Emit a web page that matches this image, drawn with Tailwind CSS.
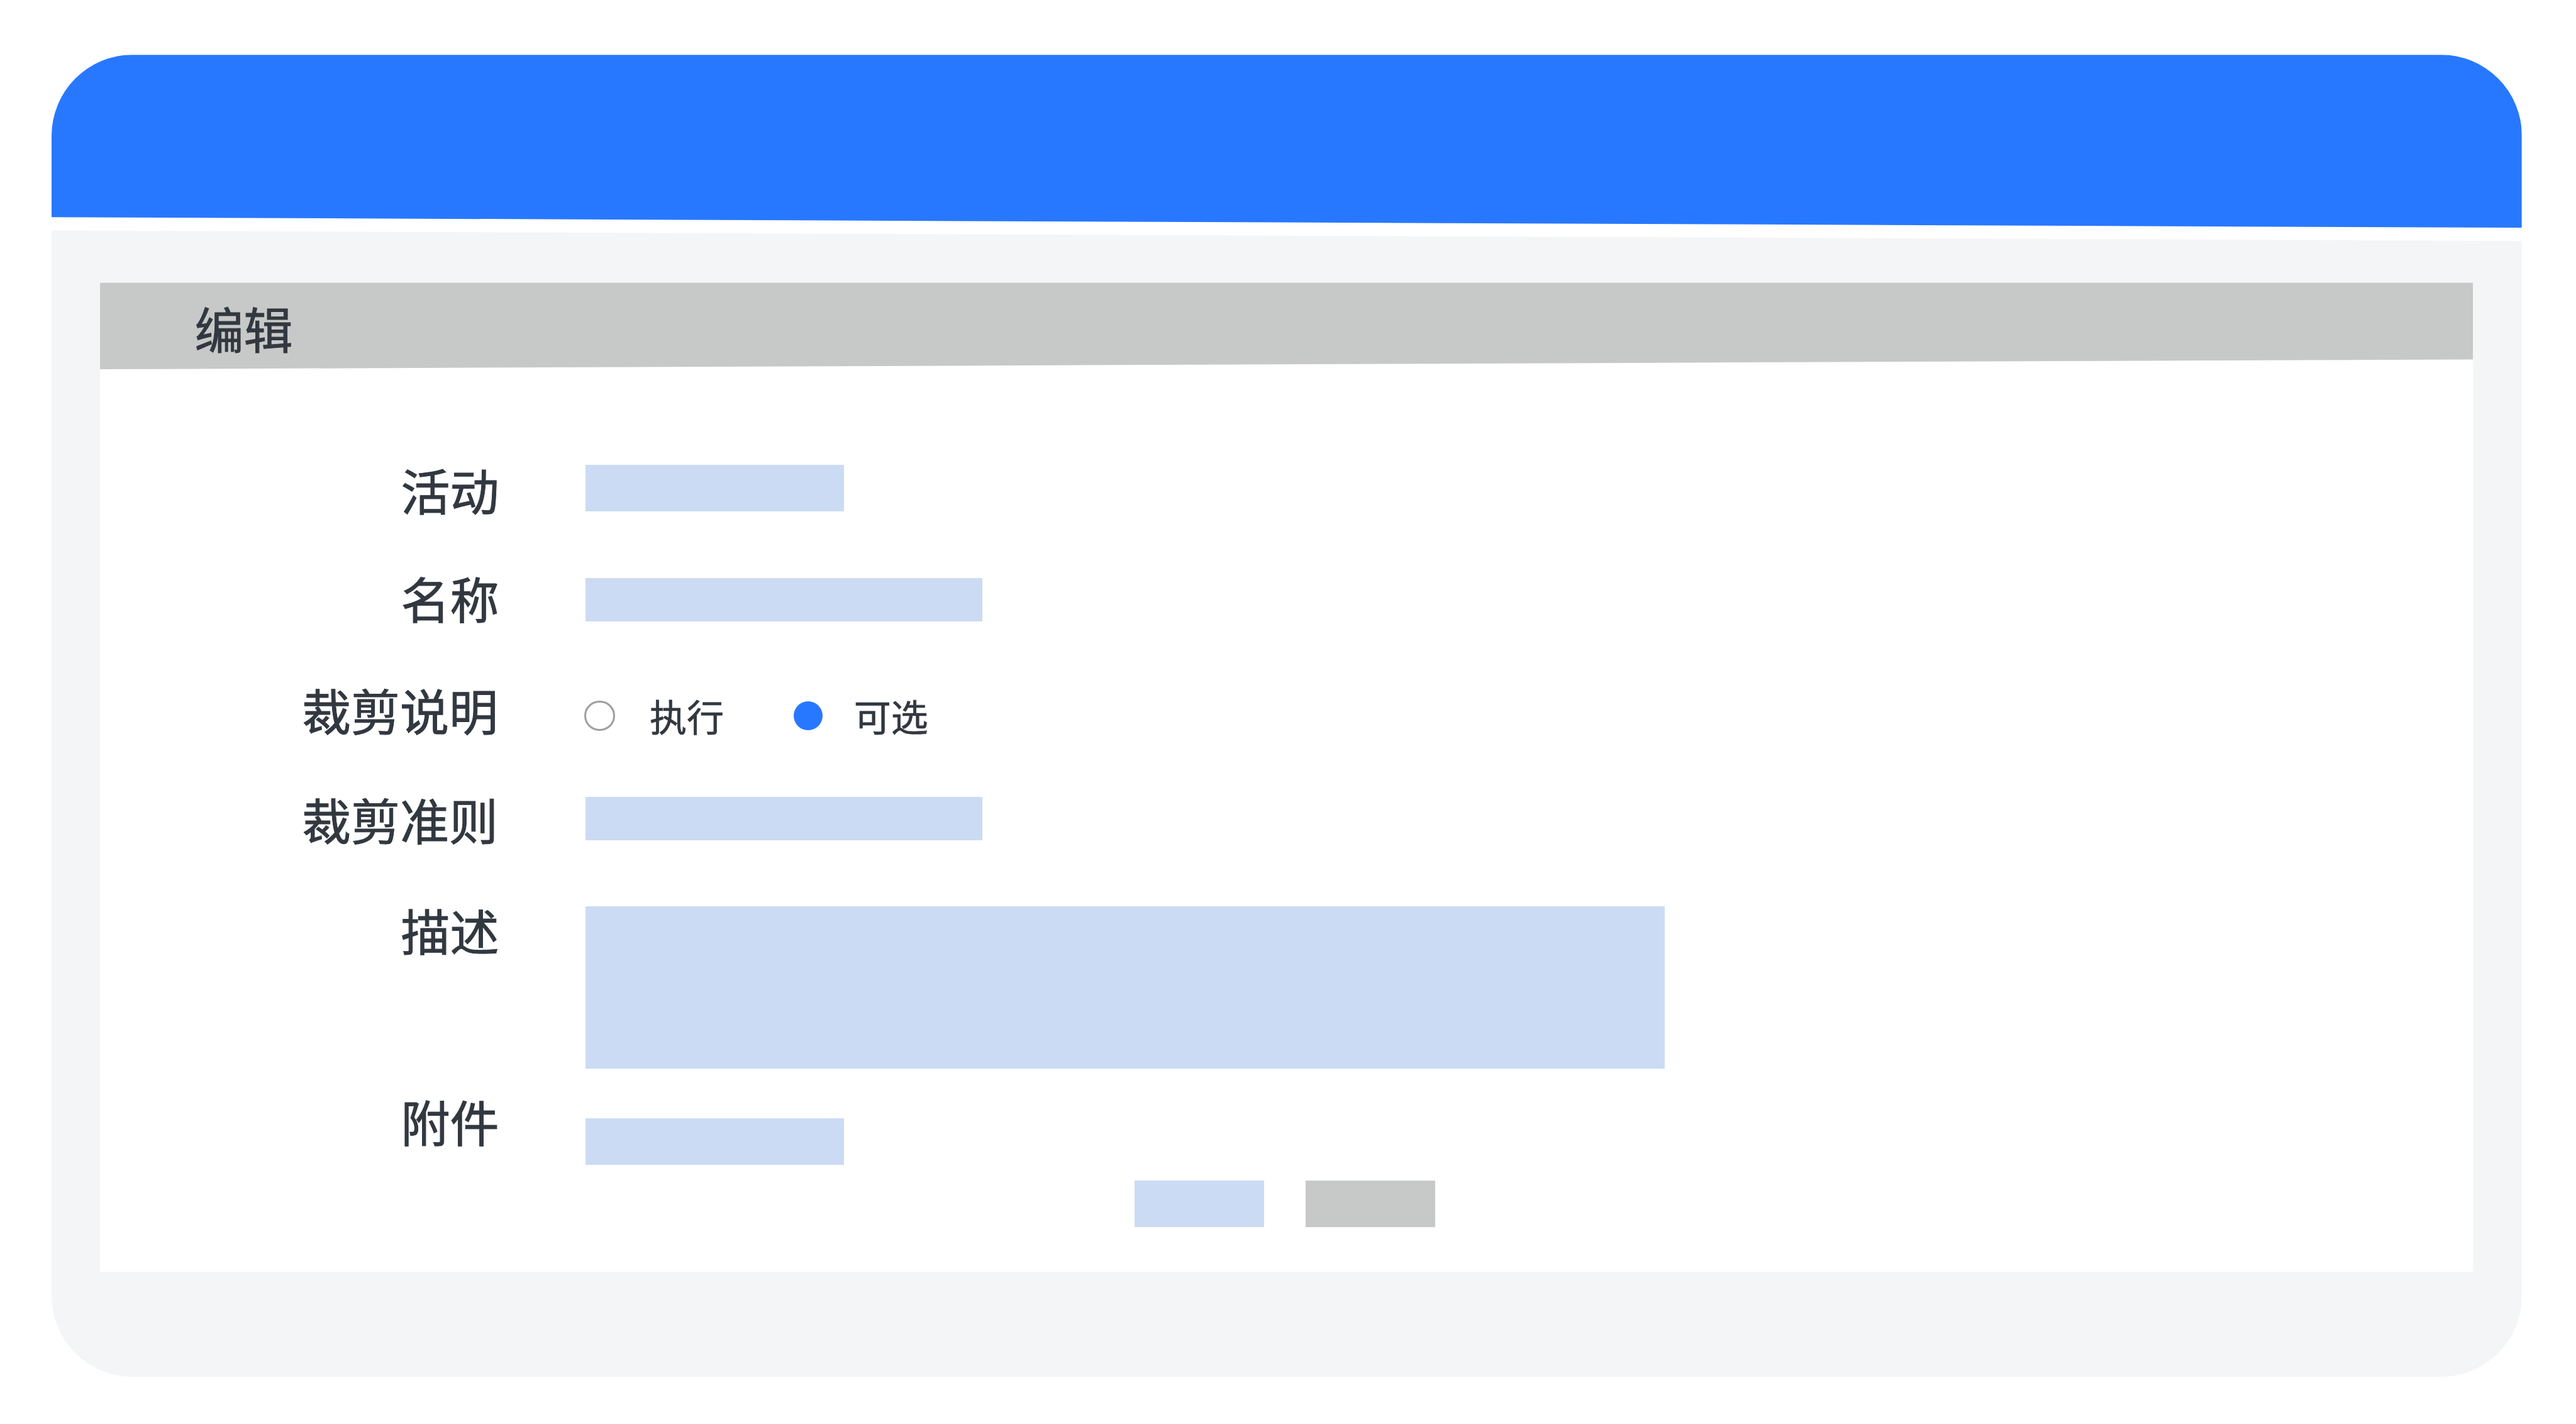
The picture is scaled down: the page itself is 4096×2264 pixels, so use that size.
<!DOCTYPE html>
<html lang="zh-CN">
<head>
    <meta charset="UTF-8">
    <meta name="viewport" content="width=device-width, initial-scale=1.0">
    <title>编辑</title>
    <script src="https://cdn.jsdelivr.net/npm/@tailwindcss/browser@4"></script>
</head>
<body class="bg-white">
    <div class="w-[4096px] h-[2264px] pt-[87.3px] pl-[81.6px] overflow-hidden font-['Noto_Sans_CJK_SC',sans-serif] text-[#323840] [-webkit-text-stroke:1px_#323840]">
        <!-- Top bar -->
        <div class="w-[3928.1px] h-[274.8px] bg-[#2878ff] rounded-t-[129px] [clip-path:polygon(0_0,100%_0,100%_100%,0_257.9px)]"></div>

        <!-- Page background -->
        <div class="w-[3928.1px] h-[1822.8px] mt-[4.3px] pt-[83.1px] pl-[77.5px] bg-[#f3f5f7] rounded-b-[129px] [clip-path:polygon(0_0,100%_16.6px,100%_100%,0_100%)]">
            <div class="w-[3773.1px] h-[1572.6px] bg-white flex flex-col">
                <!-- Title -->
                <div class="h-[137.6px] shrink-0 pl-[150.5px] pt-[31.6px] bg-[#c7c9c8] [clip-path:polygon(0_0,100%_0,100%_121.9px,0_100%)]">
                    <h1 class="text-[78px] leading-[80px]">编辑</h1>
                </div>

                <!-- Form -->
                <div class="pt-[150.9px] shrink-0">
                    <div class="flex items-start h-[172.2px]">
                        <label class="w-[634.5px] mr-[137.1px] text-right text-[78px] leading-[80px]">活动</label>
                        <div class="mt-[1.1px] w-[411.2px] h-[73.7px] bg-[#cbdbf4]"></div>
                    </div>
                    <div class="flex items-start h-[177.5px]">
                        <label class="w-[634.5px] mr-[137.1px] text-right text-[78px] leading-[80px]">名称</label>
                        <div class="mt-[8.5px] w-[631.2px] h-[69.6px] bg-[#cbdbf4]"></div>
                    </div>
                    <div class="flex items-start h-[174.6px]">
                        <label class="w-[633px] mr-[137.3px] text-right text-[78px] leading-[80px]">裁剪说明</label>
                        <div class="mt-[19.2px] flex items-center h-[62px] [-webkit-text-stroke:0.7px_#323840]">
                            <span class="size-[48.6px] rounded-full border-[3px] border-[#9e9e9e]"></span>
                            <span class="ml-[55px] w-[228.8px] text-[59px] leading-[60px]">执行</span>
                            <span class="size-[46px] rounded-full bg-[#2878ff]"></span>
                            <span class="ml-[50px] text-[59px] leading-[60px]">可选</span>
                        </div>
                    </div>
                    <div class="flex items-start h-[175.3px]">
                        <label class="w-[633px] mr-[138.6px] text-right text-[78px] leading-[80px]">裁剪准则</label>
                        <div class="mt-[4.4px] w-[631.2px] h-[69.1px] bg-[#cbdbf4]"></div>
                    </div>
                    <div class="flex items-start h-[304.7px]">
                        <label class="w-[634.5px] mr-[137.1px] text-right text-[78px] leading-[80px]">描述</label>
                        <div class="mt-[3.9px] w-[1716.7px] h-[257.4px] bg-[#cbdbf4]"></div>
                    </div>
                    <div class="flex items-start h-[134.8px]">
                        <label class="w-[634.5px] mr-[137.1px] text-right text-[78px] leading-[80px]">附件</label>
                        <div class="mt-[35.8px] w-[411.2px] h-[73.7px] bg-[#cbdbf4]"></div>
                    </div>
                </div>

                <!-- Buttons -->
                <div class="flex gap-[66.3px] pl-[1645px]">
                    <button class="w-[205.6px] h-[73.8px] bg-[#cbdbf4]"></button>
                    <button class="w-[205.9px] h-[73.8px] bg-[#c7c9c8]"></button>
                </div>
            </div>
        </div>
    </div>
</body>
</html>
